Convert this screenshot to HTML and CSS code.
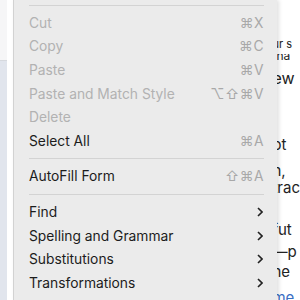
FILE: index.html
```html
<!DOCTYPE html>
<html lang="en">
<head>
    <meta charset="UTF-8">
    <title>Edit menu</title>
    <link rel="stylesheet" href="styles.css">
</head>
<body>

    <!-- Окно за меню -->
    <div class="window">
        <div class="sidebar">
            <div class="sidebar-top"></div>
            <div class="sidebar-rest"></div>
        </div>
        <div class="page">
            <p class="small">ur s</p>
            <p class="clipped">tha</p>
            <p class="big">ew</p>
            <p class="line l-ot">ot</p>
            <p class="line l-n">n,</p>
            <p class="line">trac</p>
            <p class="line l-fut">fut</p>
            <p class="line l-p">—p</p>
            <p class="line">he</p>
            <p class="line link">me</p>
        </div>
    </div>

    <!-- Контекстное меню -->
    <div class="menu">
        <div class="sep sep-top"><span></span></div>
        <div class="item disabled"><span>Cut</span><span class="key">⌘X</span></div>
        <div class="item disabled"><span>Copy</span><span class="key">⌘C</span></div>
        <div class="item disabled"><span>Paste</span><span class="key">⌘V</span></div>
        <div class="item disabled"><span>Paste and Match Style</span><span class="key">⌥⇧⌘V</span></div>
        <div class="item disabled"><span>Delete</span></div>
        <div class="item"><span>Select All</span><span class="key">⌘A</span></div>
        <div class="sep"><span></span></div>
        <div class="item"><span>AutoFill Form</span><span class="key">⇧⌘A</span></div>
        <div class="sep"><span></span></div>
        <div class="item"><span>Find</span><svg class="chev" viewBox="0 0 6 10"><path d="M1 1l4 4-4 4"/></svg></div>
        <div class="item"><span>Spelling and Grammar</span><svg class="chev" viewBox="0 0 6 10"><path d="M1 1l4 4-4 4"/></svg></div>
        <div class="item"><span>Substitutions</span><svg class="chev" viewBox="0 0 6 10"><path d="M1 1l4 4-4 4"/></svg></div>
        <div class="item"><span>Transformations</span><svg class="chev" viewBox="0 0 6 10"><path d="M1 1l4 4-4 4"/></svg></div>
    </div>

</body>
</html>
```

FILE: styles.css
```css
* {
    box-sizing: border-box;
    margin: 0;
    padding: 0;
}

body {
    font-family: Inter, 'Liberation Sans', sans-serif;
    width: 300px;
    height: 300px;
    overflow: hidden;
    position: relative;
    background: #fff;
}

/* Фон */
.window {
    display: flex;
    height: 300px;
}

.sidebar {
    width: 13px;
    display: flex;
    flex-direction: column;
}

.sidebar-top {
    height: 61px;
    background: #f6f6f7;
    border-bottom: 1px solid #d6d9de;
}

.sidebar-rest {
    flex: 1;
    background: #e1e5ed;
}

.page {
    flex: 1;
    background: #fff;
    padding-left: 265px;
    padding-top: 38px;
    color: #222;
    white-space: nowrap;
}

.small {
    font-size: 11px;
    line-height: 12px;
    height: 12px;
}

.clipped {
    font-size: 12px;
    height: 6px;
    line-height: 4px;
    margin-top: 4px;
    overflow: hidden;
}

.big {
    font-size: 16px;
    line-height: 20px;
    height: 20px;
    margin-top: 8px;
}

.line {
    font-size: 15px;
    line-height: 18px;
    height: 20px;
}

.l-ot {
    margin-top: 48px;
}

.l-n {
    margin-top: 6px;
    height: 17px;
}

.l-fut {
    margin-top: 22px;
}

.l-p {
    margin-top: 2px;
}

.link {
    color: #3b6fc4;
    text-decoration: underline;
    margin-top: 6px;
}

/* Меню */
.menu {
    position: absolute;
    left: 13px;
    top: 0;
    width: 264px;
    height: 300px;
    background: #ebebeb;
    border-left: 1px solid #d2d2d2;
    box-shadow: 2px 0 4px rgba(0, 0, 0, 0.12);
    padding: 0 13px 0 15px;
}

.sep {
    height: 12px;
    display: flex;
    align-items: center;
}

.sep-top {
    height: 11px;
}

.sep span {
    flex: 1;
    height: 1px;
    background: #d3d3d3;
}

.item {
    height: 23.6px;
    display: flex;
    align-items: center;
    justify-content: space-between;
    font-size: 13.8px;
    color: #1c1c1c;
}

.item.disabled {
    color: #b2b2b2;
}

.key {
    color: #a8a8a8;
    letter-spacing: 0.5px;
}

.chev {
    width: 6px;
    height: 10px;
    margin-right: 1px;
    fill: none;
    stroke: #222;
    stroke-width: 1.6;
}
```
